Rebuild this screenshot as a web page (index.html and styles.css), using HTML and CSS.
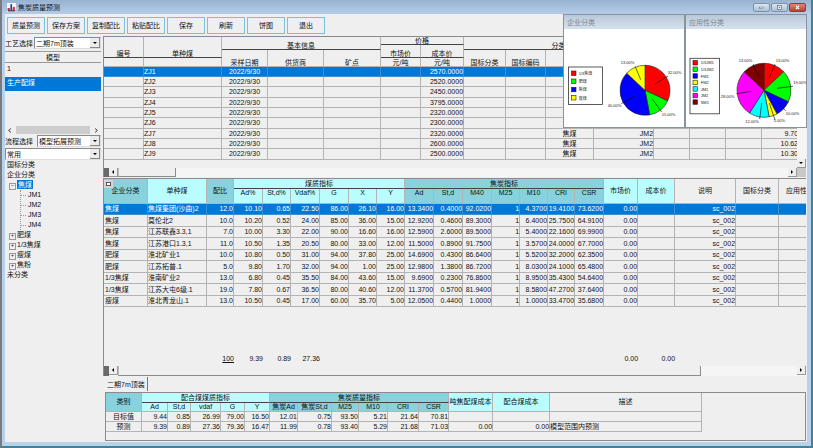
FILE: index.html
```html
<!DOCTYPE html>
<html lang="zh-CN">
<head>
<meta charset="utf-8">
<title>焦炭质量预测</title>
<link rel="stylesheet" href="styles.css">
</head>
<body>
<div class="window">
  <header class="titlebar">
    <svg class="app-icon" viewBox="0 0 16 16" aria-hidden="true"><rect width="16" height="16" fill="#f4f6fa"/><path d="M1 9h4v5H1z" fill="#d22"/><path d="M6 2h3v12H6z" fill="#24a"/><path d="M10 7h4v7h-4z" fill="#d33"/><path d="M2 14h13" stroke="#236" stroke-width="2"/></svg>
    <h1>焦炭质量预测</h1>
    <div class="win-buttons">
      <button type="button" aria-label="最小化"><svg viewBox="0 0 16 9"><rect x="5.500" y="4" width="5" height="2" fill="#fff" stroke="#555" stroke-width=".6"/></svg></button>
      <button type="button" aria-label="还原"><svg viewBox="0 0 16 9"><rect x="5.500" y="2" width="5" height="5" fill="#fff" stroke="#555" stroke-width=".8"/><rect x="7" y="3.500" width="2" height="2" fill="#777"/></svg></button>
      <button type="button" class="close" aria-label="关闭"><svg viewBox="0 0 16 9"><path d="M6 2.500l4 4M10 2.500l-4 4" stroke="#fff" stroke-width="1.500"/></svg></button>
    </div>
  </header>

  <nav class="toolbar">
    <button type="button">质量预测</button><button type="button">保存方案</button><button type="button">复制配比</button><button type="button">粘贴配比</button><button type="button">保存</button><button type="button">刷新</button><button type="button">饼图</button><button type="button">退出</button>
  </nav>

  <div class="body">
    <aside class="side">
      <div class="field"><label for="craft">工艺选择</label><span class="combo"><select id="craft"><option>二期7m顶装</option></select></span></div>
      <div class="models">
        <table>
          <thead><tr><th>模型</th></tr></thead>
          <tbody><tr><td>1</td></tr><tr class="sel"><td>生产配煤</td></tr></tbody>
        </table>
        <div class="thinbar"><svg viewBox="0 0 5 5"><path d="M4 .5l-2.500 2 2.500 2"/></svg><i></i><svg viewBox="0 0 5 5"><path d="M1 .5l2.500 2-2.500 2"/></svg></div>
      </div>
      <div class="field flow"><label for="flow">流程选择</label><span class="combo"><select id="flow"><option>模型拓展预测</option></select></span></div>
      <span class="combo wide"><select aria-label="常用"><option>常用</option></select></span>
      <ul class="tree">
        <li>国标分类</li>
        <li>企业分类
          <ul>
            <li class="node open"><span class="picked">焦煤</span>
              <ul class="leaves"><li>JM1</li><li>JM2</li><li>JM3</li><li>JM4</li></ul>
            </li>
            <li class="node">肥煤</li>
            <li class="node">1/3焦煤</li>
            <li class="node">瘦煤</li>
            <li class="node">焦粉</li>
          </ul>
        </li>
        <li>未分类</li>
      </ul>
    </aside>

    <main class="main">
      <section class="panel">
        <div class="panel-row">
          <div class="clip">
            <table class="grid coal">
              <colgroup><col class="w40"><col class="w78"><col class="w46"><col class="w56"><col class="w57"><col class="w40"><col class="w43"><col class="w42"><col class="w40"><col class="w48"><col class="w60"><col class="w36"><col class="w36"><col class="w36"><col class="w37"></colgroup>
              <thead>
                <tr class="h8"><th rowspan="3" class="line">编号</th><th rowspan="3" class="line">单种煤</th><th rowspan="2" colspan="3" class="line">基本信息</th><th colspan="2" class="line">价格</th><th rowspan="2" colspan="4" class="line">分类</th><th rowspan="2" colspan="4" class="line"></th></tr>
                <tr class="h5"><th rowspan="2" class="line">市场价</th><th rowspan="2" class="line">成本价</th></tr>
                <tr class="h8"><th rowspan="2">采样日期</th><th rowspan="2">供货商</th><th rowspan="2">矿点</th><th rowspan="2">国标分类</th><th rowspan="2">国标编码</th><th rowspan="2">企业</th><th rowspan="2"></th><th rowspan="2"></th><th rowspan="2"></th><th rowspan="2"></th><th rowspan="2"></th></tr>
                <tr class="h9"><th></th><th></th><th>元/吨</th><th>元/吨</th></tr>
              </thead>
              <tbody>
                <tr class="sel"><td></td><td>ZJ1</td><td class="c">2022/9/30</td><td></td><td></td><td></td><td>2570.0000</td><td></td><td></td><td></td><td></td><td></td><td></td><td></td><td></td></tr>
                <tr><td></td><td>ZJ2</td><td class="c">2022/9/30</td><td></td><td></td><td></td><td>2520.0000</td><td></td><td></td><td></td><td></td><td></td><td></td><td></td><td></td></tr>
                <tr><td></td><td>ZJ3</td><td class="c">2022/9/30</td><td></td><td></td><td></td><td>2450.0000</td><td></td><td></td><td></td><td></td><td></td><td></td><td></td><td></td></tr>
                <tr><td></td><td>ZJ4</td><td class="c">2022/9/30</td><td></td><td></td><td></td><td>3795.0000</td><td></td><td></td><td></td><td></td><td></td><td></td><td></td><td></td></tr>
                <tr><td></td><td>ZJ5</td><td class="c">2022/9/30</td><td></td><td></td><td></td><td>2320.0000</td><td></td><td></td><td></td><td></td><td></td><td></td><td></td><td></td></tr>
                <tr><td></td><td>ZJ6</td><td class="c">2022/9/30</td><td></td><td></td><td></td><td>2300.0000</td><td></td><td></td><td></td><td></td><td></td><td></td><td></td><td></td></tr>
                <tr><td></td><td>ZJ7</td><td class="c">2022/9/30</td><td></td><td></td><td></td><td>2320.0000</td><td></td><td></td><td class="c">焦煤</td><td>JM2</td><td></td><td></td><td></td><td>9.70</td></tr>
                <tr><td></td><td>ZJ8</td><td class="c">2022/9/30</td><td></td><td></td><td></td><td>2600.0000</td><td></td><td></td><td class="c">焦煤</td><td>JM2</td><td></td><td></td><td></td><td>10.62</td></tr>
                <tr><td></td><td>ZJ9</td><td class="c">2022/9/30</td><td></td><td></td><td></td><td>2500.0000</td><td></td><td></td><td class="c">焦煤</td><td>JM2</td><td></td><td></td><td></td><td>10.30</td></tr>
              </tbody>
            </table>
          </div>
          <div class="vscroll"><span class="arrow down"></span></div>
        </div>
        <div class="hscroll short"><b></b><span class="arrow left"></span><i></i><span class="arrow right"></span><em></em></div>
      </section>

      <section class="panel mix-panel">
        <div class="clip">
          <span class="pin"></span>
          <table class="grid mix">
            <colgroup><col class="w44"><col class="w59"><col class="w27"><col class="w29"><col class="w28"><col class="w29"><col class="w29"><col class="w28"><col class="w28"><col class="w29"><col class="w29"><col class="w29"><col class="w28"><col class="w28"><col class="w27"><col class="w29"><col class="w34"><col class="w37"><col class="w61"><col class="w43"><col class="w50"></colgroup>
            <thead>
              <tr class="h10"><th rowspan="2" class="teal">企业分类</th><th rowspan="2" class="cyan">单种煤</th><th rowspan="2" class="teal">配比</th><th colspan="6" class="cyan line">煤质指标</th><th colspan="7" class="teal line">焦炭指标</th><th rowspan="2" class="cyan">市场价</th><th rowspan="2" class="cyan">成本价</th><th rowspan="2">说明</th><th rowspan="2">国标分类</th><th rowspan="2">应用性分类</th></tr>
              <tr class="h15 top"><th class="cyan">Ad%</th><th class="cyan">St,d%</th><th class="cyan">Vdaf%</th><th class="cyan">G</th><th class="cyan">X</th><th class="cyan">Y</th><th class="teal">Ad</th><th class="teal">St,d</th><th class="teal">M40</th><th class="teal">M25</th><th class="teal">M10</th><th class="teal">CRI</th><th class="teal">CSR</th></tr>
            </thead>
            <tbody>
              <tr class="sel"><td>焦煤</td><td>焦煤集团(沙曲)2</td><td>12.0</td><td>10.10</td><td>0.65</td><td>22.50</td><td>86.00</td><td>26.10</td><td>16.00</td><td>13.3400</td><td>0.4000</td><td>92.0200</td><td>1</td><td>4.3700</td><td>19.4100</td><td>73.6200</td><td>0.00</td><td></td><td>sc_002</td><td></td><td></td></tr>
              <tr><td>焦煤</td><td>莫伦北2</td><td>10.0</td><td>10.20</td><td>0.52</td><td>24.00</td><td>85.00</td><td>36.00</td><td>15.00</td><td>12.9200</td><td>0.4600</td><td>89.3000</td><td>1</td><td>6.4000</td><td>25.7500</td><td>64.9100</td><td>0.00</td><td></td><td>sc_002</td><td></td><td></td></tr>
              <tr><td>焦煤</td><td>江苏联鑫3.3,1</td><td>7.0</td><td>10.00</td><td>3.30</td><td>22.00</td><td>90.00</td><td>16.60</td><td>16.00</td><td>12.5900</td><td>2.6000</td><td>89.5000</td><td>1</td><td>5.4000</td><td>22.1600</td><td>69.9900</td><td>0.00</td><td></td><td>sc_002</td><td></td><td></td></tr>
              <tr><td>焦煤</td><td>江苏港口1.3,1</td><td>11.0</td><td>10.50</td><td>1.35</td><td>20.50</td><td>80.00</td><td>33.00</td><td>12.00</td><td>11.5000</td><td>0.8900</td><td>91.7500</td><td>1</td><td>3.5700</td><td>24.0000</td><td>67.7000</td><td>0.00</td><td></td><td>sc_002</td><td></td><td></td></tr>
              <tr><td>肥煤</td><td>淮北矿业1</td><td>10.0</td><td>10.80</td><td>0.50</td><td>31.00</td><td>94.00</td><td>37.80</td><td>25.00</td><td>14.6900</td><td>0.4300</td><td>86.6400</td><td>1</td><td>5.5200</td><td>32.2000</td><td>62.3500</td><td>0.00</td><td></td><td>sc_002</td><td></td><td></td></tr>
              <tr><td>肥煤</td><td>江苏拓普.1</td><td>5.0</td><td>9.80</td><td>1.70</td><td>32.00</td><td>94.00</td><td>1.00</td><td>25.00</td><td>12.9800</td><td>1.3800</td><td>86.7200</td><td>1</td><td>8.0300</td><td>24.1000</td><td>65.4800</td><td>0.00</td><td></td><td>sc_002</td><td></td><td></td></tr>
              <tr><td>1/3焦煤</td><td>淮南矿业2</td><td>13.0</td><td>6.80</td><td>0.45</td><td>35.50</td><td>84.00</td><td>43.60</td><td>15.00</td><td>9.6900</td><td>0.2300</td><td>76.8600</td><td>1</td><td>8.9500</td><td>35.4300</td><td>54.6400</td><td>0.00</td><td></td><td>sc_002</td><td></td><td></td></tr>
              <tr><td>1/3焦煤</td><td>江苏大屯6级.1</td><td>19.0</td><td>7.80</td><td>0.67</td><td>36.50</td><td>80.00</td><td>40.60</td><td>12.00</td><td>11.3700</td><td>0.5700</td><td>81.9400</td><td>1</td><td>8.5800</td><td>47.2700</td><td>37.6400</td><td>0.00</td><td></td><td>sc_002</td><td></td><td></td></tr>
              <tr><td>瘦煤</td><td>淮北青龙山.1</td><td>13.0</td><td>10.50</td><td>0.45</td><td>17.00</td><td>60.00</td><td>35.70</td><td>5.00</td><td>12.0500</td><td>0.4400</td><td>1.0000</td><td>1</td><td>1.0000</td><td>33.4700</td><td>35.6800</td><td>0.00</td><td></td><td>sc_002</td><td></td><td></td></tr>
            </tbody>
            <tfoot>
              <tr><td></td><td></td><td><u>100</u></td><td>9.39</td><td>0.89</td><td>27.36</td><td colspan="10"></td><td>0.00</td><td>0.00</td><td colspan="3"></td></tr>
            </tfoot>
          </table>
        </div>
        <div class="hscroll long"><b></b><span class="arrow left"></span><i></i><span class="arrow right"></span></div>
      </section>

      <div class="tabs"><button type="button">二期7m顶装</button></div>

      <section class="result">
        <table class="grid sum">
          <colgroup><col class="w36"><col class="w26"><col class="w23"><col class="w30"><col class="w24"><col class="w25"><col class="w28"><col class="w34"><col class="w27"><col class="w29"><col class="w31"><col class="w30"><col class="w44"><col class="w57"><col class="w152"></colgroup>
          <thead>
            <tr class="h10"><th rowspan="2" class="teal">类别</th><th colspan="5" class="cyan line">配合煤煤质指标</th><th colspan="6" class="teal line">焦炭质量指标</th><th rowspan="2" class="cyan">吨焦配煤成本</th><th rowspan="2" class="cyan">配合煤成本</th><th rowspan="2">描述</th></tr>
            <tr class="h9"><th class="cyan">Ad</th><th class="cyan">St,d</th><th class="cyan">vdaf</th><th class="cyan">G</th><th class="cyan">Y</th><th class="teal">焦炭Ad</th><th class="teal">焦炭St,d</th><th class="teal">M25</th><th class="teal">M10</th><th class="teal">CRI</th><th class="teal">CSR</th></tr>
          </thead>
          <tbody>
            <tr><td>目标值</td><td>9.44</td><td>0.85</td><td>26.99</td><td>79.00</td><td>16.50</td><td>12.01</td><td>0.75</td><td>93.50</td><td>5.21</td><td>21.64</td><td>70.81</td><td></td><td></td><td></td></tr>
            <tr><td>预测</td><td>9.39</td><td>0.89</td><td>27.36</td><td>79.36</td><td>16.47</td><td>11.99</td><td>0.78</td><td>93.40</td><td>5.29</td><td>21.68</td><td>71.03</td><td>0.00</td><td>0.00</td><td>模型范围内预测</td></tr>
          </tbody>
        </table>
      </section>
    </main>
  </div>

  <div class="popups">
    <section class="popup">
      <h2>企业分类</h2>
      <svg viewBox="0 0 120 98">
        <rect x="4.500" y="38" width="34" height="37.500" fill="#fff" stroke="#333" stroke-width=".8"/>
        <g stroke="#222" stroke-width=".6">
          <rect x="7.500" y="42" width="4.500" height="4.500" fill="#f00"/><rect x="7.500" y="50" width="4.500" height="4.500" fill="#0f0"/><rect x="7.500" y="58.300" width="4.500" height="4.500" fill="#00f"/><rect x="7.500" y="66.500" width="4.500" height="4.500" fill="#ff0"/>
          <path fill="#f00" d="M81 61.300V36.300A25 25 0 0 1 103.600 71.900Z"/>
          <path fill="#0f0" d="M81 61.300L103.600 71.900A25 25 0 0 1 85.700 85.900Z"/>
          <path fill="#00f" d="M81 61.300L85.700 85.900A25 25 0 0 1 62.800 44.200Z"/>
          <path fill="#ff0" d="M81 61.300L62.800 44.200A25 25 0 0 1 81 36.300Z"/>
          <path stroke="#000" d="M71.300 37.700L76.700 50.700M104 47L91 55M97.700 83L88.300 70M57.300 74.700L71 67"/>
        </g>
        <g class="tiny"><text x="14.700" y="46">1/3焦煤</text><text x="14.700" y="54">肥煤</text><text x="14.700" y="62.300">焦煤</text><text x="14.700" y="70.500">瘦煤</text><text x="56.700" y="35">13.00%</text><text x="103.700" y="45.300">32.00%</text><text x="97.700" y="87">15.00%</text><text x="43.700" y="78.300">40.00%</text></g>
      </svg>
    </section>
    <section class="popup">
      <h2>应用性分类</h2>
      <svg viewBox="0 0 120 98">
        <rect x="4" y="29.300" width="29.500" height="55.500" fill="#fff" stroke="#333" stroke-width=".8"/>
        <g stroke="#222" stroke-width=".6">
          <rect x="7" y="31.500" width="4.500" height="4.500" fill="#f00"/><rect x="7" y="38" width="4.500" height="4.500" fill="#0f0"/><rect x="7" y="44.700" width="4.500" height="4.500" fill="#00f"/><rect x="7" y="51.200" width="4.500" height="4.500" fill="#ff0"/><rect x="7" y="57.700" width="4.500" height="4.500" fill="#0ff"/><rect x="7" y="64.300" width="4.500" height="4.500" fill="#f0f"/><rect x="7" y="70.800" width="4.500" height="4.500" fill="#800000"/>
          <path fill="#f00" d="M78 61.300V34.300A27 27 0 0 1 97.700 42.800Z"/>
          <path fill="#0f0" d="M78 61.300L97.700 42.800A27 27 0 0 1 102.400 72.800Z"/>
          <path fill="#00f" d="M78 61.300L102.400 72.800A27 27 0 0 1 91 85Z"/>
          <path fill="#ff0" d="M78 61.300L91 85A27 27 0 0 1 83.100 87.800Z"/>
          <path fill="#0ff" d="M78 61.300L83.100 87.800A27 27 0 0 1 63.500 84.100Z"/>
          <path fill="#f0f" d="M78 61.300L63.500 84.100A27 27 0 0 1 58.300 42.800Z"/>
          <path fill="#800000" d="M78 61.300L58.300 42.800A27 27 0 0 1 78 34.300Z"/>
          <path stroke="#000" d="M67.300 35.300L73 48.700M89 35.300L83 49.300M107 57.300L91 59.300M99.700 81.700L89 71.300M89 91L83.300 74M73.700 90L75.700 74M50.700 64.700L65.300 62.300"/>
        </g>
        <g class="tiny"><text x="14.700" y="35.400">1/3JM1</text><text x="14.700" y="41.900">1/3JM2</text><text x="14.700" y="48.600">FM1</text><text x="14.700" y="55.100">FM2</text><text x="14.700" y="61.600">JM1</text><text x="14.700" y="68.200">JM2</text><text x="14.700" y="74.700">SM1</text><text x="52.700" y="33.300">13.00%</text><text x="89.700" y="33.300">13.00%</text><text x="107.300" y="54.700">19.00%</text><text x="99.700" y="85.700">10.00%</text><text x="87.700" y="93">5.00%</text><text x="59.300" y="94.300">12.00%</text><text x="34.700" y="69">28.00%</text></g>
      </svg>
    </section>
  </div>
</div>
</body>
</html>
```
FILE: styles.css
```css
* { box-sizing: border-box; }
body {
  margin: 0;
  background: #efefef;
  color: #111;
  font: 7px/9px "Liberation Sans", "Noto Sans CJK SC", sans-serif;
}
button, select { font: inherit; color: inherit; margin: 0; padding: 0; }
h1, h2 { margin: 0; font-size: 7px; font-weight: 400; }
ul { margin: 0; padding: 0; list-style: none; }

.window {
  position: relative;
  display: flex;
  flex-direction: column;
  min-height: 100vh;
  border: solid #3f8494;
  border-width: 0 2px 2px 0;
  border-left: 2px solid #777c82;
  background: #b9d1ea;
  overflow: hidden;
}
.titlebar {
  display: flex;
  align-items: center;
  gap: 2px;
  height: 14px;
  padding: 1px 5px;
  background: linear-gradient(#98b3d0, #b4cce8);
}
.app-icon { width: 9px; height: 9px; }
.win-buttons { display: flex; gap: 1px; margin-left: auto; }
.win-buttons button {
  width: 17px;
  height: 9px;
  border: 1px solid #7d92aa;
  border-radius: 2px;
  background: linear-gradient(#dce7f3, #a9bed6);
}
.win-buttons svg { display: block; width: 100%; height: 100%; }
.win-buttons .close { border-color: #8c4038; background: linear-gradient(#dd8a7c, #bd3f2c); }

.toolbar {
  display: flex;
  gap: 2px;
  margin: 0 4px 0 3px;
  padding: 3px 2px 2px;
  background: #efefef;
}
.toolbar button { flex: 1; max-width: 38px; height: 17px; border: 1px solid #7fbedb; background: #efefef; }

.body {
  flex: 1;
  display: flex;
  gap: 2px;
  margin: 0 4px 4px 3px;
  padding-right: 1px;
  background: #efefef;
}

/* left side */
.side { flex: none; width: 96px; padding-top: 1px; }
.field { display: flex; gap: 1px; align-items: center; }
.field label { flex: none; width: 28px; white-space: nowrap; }
.combo { position: relative; display: block; flex: 1; }
.combo select {
  display: block;
  width: 100%;
  height: 12px;
  padding-left: 1px;
  border: 1px solid #8a8a8a;
  border-right-color: #ddd;
  border-bottom-color: #ddd;
  border-radius: 0;
  background: #fff;
  appearance: none;
}
.combo::after, .arrow::after { content: ""; border: 2px solid transparent; }
.combo::after {
  position: absolute;
  top: 5px;
  right: 4px;
  border-top-color: #000;
  border-bottom-width: 0;
}
.combo::before {
  content: "";
  position: absolute;
  top: 1px;
  right: 1px;
  bottom: 1px;
  width: 9px;
  border: solid #888;
  border-width: 0 1px 1px 0;
  background: #ececec;
}
.models {
  display: flex;
  flex-direction: column;
  height: 84px;
  margin-top: 2px;
  border-top: 1px solid #999;
}
.models table { width: 100%; border-spacing: 0; }
.models th { height: 11px; padding: 0; border-bottom: 1px solid #999; font-weight: 400; }
.models td { height: 14px; padding: 0 2px; vertical-align: top; line-height: 11px; }
.thinbar { display: flex; align-items: center; gap: 4px; height: 10px; margin-top: auto; padding: 1px 2px; }
.thinbar i { flex: 1; height: 8px; background: #cdcdcd; }
.thinbar svg { width: 5px; height: 5px; fill: none; stroke: #444; }
.flow .combo { margin-left: 3px; }
.wide { margin-top: 1px; }
.tree { padding-left: 2px; line-height: 10px; }
.tree .node { position: relative; padding-left: 10px; }
.tree .node::before {
  content: "+";
  position: absolute;
  top: 3px;
  left: 2px;
  width: 5px;
  height: 5px;
  border: 1px solid #999;
  line-height: 3px;
  font-size: 5px;
  text-align: center;
}
.tree .open::before { content: "–"; }
.picked { display: inline-block; height: 9px; padding: 0 1px; background: #0078d7; color: #fff; line-height: 9px; vertical-align: top; }
.leaves { margin-left: 3px; border-left: 1px dotted #999; }
.leaves li { display: flex; align-items: center; gap: 2px; }
.leaves li::before { content: ""; width: 5px; border-top: 1px dotted #999; }

/* data grids */
.main { flex: 1; min-width: 0; display: flex; flex-direction: column; }
.panel { border: solid #8b8b8b; border-width: 1px 0 0 1px; margin-bottom: 1px; }
.panel-row { display: flex; height: 131px; }
.clip { position: relative; flex: 1; min-width: 0; overflow: hidden; }
.grid { width: 1px; table-layout: fixed; border-collapse: separate; border-spacing: 0; }
.grid th, .grid td {
  padding: 0;
  border: solid #b4b4b4;
  border-width: 0 1px 1px 0;
  font-weight: 400;
  white-space: nowrap;
  line-height: 8px;
}
.grid td { text-align: right; }
.coal td:nth-child(-n+2), .mix td:nth-child(-n+2) { text-align: left; }
.mix td:first-child { padding-left: 1px; }
.grid td.c { text-align: center; }
.grid .line { border-bottom-color: #444; }
.coal th { vertical-align: bottom; line-height: 7px; }
.coal tbody tr { height: 10px; }
.coal tbody tr:nth-child(3n) { height: 11px; }
.mix tbody tr { height: 11px; }
.mix tbody tr:nth-child(even) { height: 12px; }
.mix tfoot tr { height: 56px; }
.mix tfoot td { border: 0; vertical-align: bottom; }
.mix .top th { vertical-align: top; }
.sum tbody tr { height: 10px; }
.sum td:first-child { text-align: center; }
.sum td:last-child { text-align: left; }
.h5 { height: 5px; }
.h8 { height: 8px; }
.h9 { height: 9px; }
.h10 { height: 10px; }
.h15 { height: 15px; }
.w23 { width: 23px; }
.w24 { width: 24px; }
.w25 { width: 25px; }
.w26 { width: 26px; }
.w27 { width: 27px; }
.w28 { width: 28px; }
.w29 { width: 29px; }
.w30 { width: 30px; }
.w31 { width: 31px; }
.w34 { width: 34px; }
.w36 { width: 36px; }
.w37 { width: 37px; }
.w40 { width: 40px; }
.w42 { width: 42px; }
.w43 { width: 43px; }
.w44 { width: 44px; }
.w46 { width: 46px; }
.w48 { width: 48px; }
.w50 { width: 50px; }
.w56 { width: 56px; }
.w57 { width: 57px; }
.w59 { width: 59px; }
.w60 { width: 60px; }
.w61 { width: 61px; }
.w78 { width: 78px; }
.w152 { width: 152px; }
.grid .teal { background: #88d2dd; }
.grid .cyan { background: #b9fdff; }
.sel td { background: #0078d7; color: #fff; }
.grid .sel td { border-color: #3d8fce; }

.pin {
  position: absolute;
  top: 1px;
  left: 0;
  width: 9px;
  height: 8px;
  border: 2px solid #d4d4d4;
  background: #fff;
  outline: 1px solid #555;
  outline-offset: -3px;
}

/* scrollbars */
.vscroll { display: flex; align-items: flex-end; width: 9px; background: #f5f5f5; }
.hscroll { display: flex; height: 10px; background: #f5f5f5; }
.hscroll b { width: 5px; background: #6a6a6a; }
.hscroll i { border: solid #8b8b8b; border-width: 0 1px 1px 0; border-left: 1px solid #bbb; background: #efefef; }
.hscroll em { width: 9px; background: #c8c8c8; }
.short { height: 9px; }
.short i { width: 58px; }
.long { margin-top: 3px; }
.long i { flex: 0 0 83%; }
.arrow {
  display: flex;
  align-items: center;
  justify-content: center;
  width: 9px;
  height: 9px;
  border: solid #999;
  border-width: 0 1px 1px 0;
  background: #efefef;
}
.arrow.right { margin-left: auto; }
.down::after { border-top-color: #000; border-bottom-width: 0; }
.left::after { border-right-color: #000; border-left-width: 0; }
.right::after { border-left-color: #000; border-right-width: 0; }

.tabs button {
  display: block;
  height: 14px;
  padding: 0 2px 0 4px;
  border: 0;
  border-right: 1px solid #777;
  background: #efefef;
}
.result {
  flex: 1;
  margin: 1px 0 1px 2px;
  border: 1px solid #8b8b8b;
}

/* chart windows */
.popups { position: absolute; top: 14px; right: 4px; display: flex; }
.popup { width: 122px; border: 1px solid #8a939c; background: #fff; }
.popup h2 {
  height: 14px;
  padding-left: 3px;
  background: linear-gradient(#b9c8d8, #d5e1ee);
  color: #808890;
  line-height: 15px;
}
.popup svg { display: block; width: 120px; height: 98px; }
.tiny { font-size: 4px; fill: #222; }
```
